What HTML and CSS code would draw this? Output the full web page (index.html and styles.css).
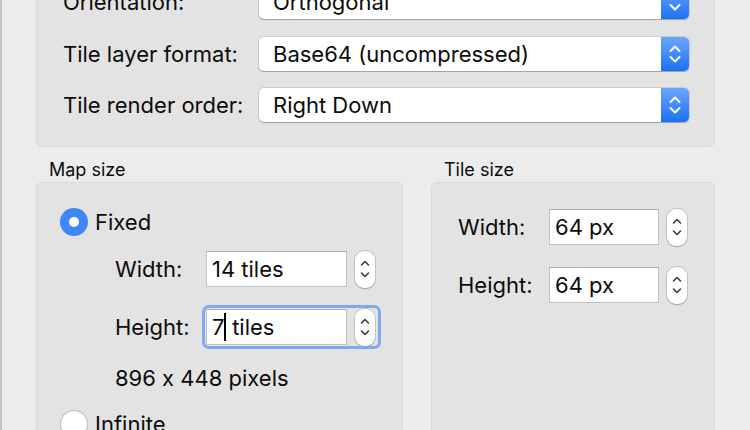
FILE: index.html
```html
<!DOCTYPE html>
<html>
<head>
<meta charset="utf-8">
<link rel="stylesheet" href="styles.css">
</head>
<body>
<div class="window">
  <section class="group top">
    <div class="form">
      <div class="row">
        <span class="label">Orientation:</span>
        <div class="combo"><span class="combo-text">Orthogonal</span><span class="combo-btn"><svg width="14" height="20" viewBox="0 0 14 20"><path d="M2.5 7 L7 2.5 L11.5 7 M2.5 13 L7 17.5 L11.5 13"/></svg></span></div>
      </div>
      <div class="row">
        <span class="label">Tile layer format:</span>
        <div class="combo"><span class="combo-text">Base64 (uncompressed)</span><span class="combo-btn"><svg width="14" height="20" viewBox="0 0 14 20"><path d="M2.5 7 L7 2.5 L11.5 7 M2.5 13 L7 17.5 L11.5 13"/></svg></span></div>
      </div>
      <div class="row">
        <span class="label">Tile render order:</span>
        <div class="combo"><span class="combo-text">Right Down</span><span class="combo-btn"><svg width="14" height="20" viewBox="0 0 14 20"><path d="M2.5 7 L7 2.5 L11.5 7 M2.5 13 L7 17.5 L11.5 13"/></svg></span></div>
      </div>
    </div>
  </section>

  <div class="columns">
    <div class="col col-map">
      <div class="group-title">Map size</div>
      <div class="group box map-box">
        <div class="radio-row">
          <span class="radio checked"></span><span class="radio-label">Fixed</span>
        </div>
        <div class="fields map-fields">
          <div class="field-row">
            <span class="flabel">Width:</span>
            <div class="spin">
              <div class="input"><span>14 tiles</span></div>
              <span class="stepper"><svg width="10" height="20" viewBox="0 0 10 20"><path d="M1.5 6 L5 2.5 L8.5 6 M1.5 14 L5 17.5 L8.5 14"/></svg></span>
            </div>
          </div>
          <div class="field-row">
            <span class="flabel">Height:</span>
            <div class="spin focused">
              <div class="input"><span>7</span><span class="caret"></span><span> tiles</span></div>
              <span class="stepper"><svg width="10" height="20" viewBox="0 0 10 20"><path d="M1.5 6 L5 2.5 L8.5 6 M1.5 14 L5 17.5 L8.5 14"/></svg></span>
            </div>
          </div>
          <div class="pixels">896 x 448 pixels</div>
        </div>
        <div class="radio-row">
          <span class="radio"></span><span class="radio-label">Infinite</span>
        </div>
      </div>
    </div>

    <div class="col col-tile">
      <div class="group-title">Tile size</div>
      <div class="group box tile-box">
        <div class="fields">
          <div class="field-row">
            <span class="flabel">Width:</span>
            <div class="spin">
              <div class="input small"><span>64 px</span></div>
              <span class="stepper"><svg width="10" height="20" viewBox="0 0 10 20"><path d="M1.5 6 L5 2.5 L8.5 6 M1.5 14 L5 17.5 L8.5 14"/></svg></span>
            </div>
          </div>
          <div class="field-row">
            <span class="flabel">Height:</span>
            <div class="spin">
              <div class="input small"><span>64 px</span></div>
              <span class="stepper"><svg width="10" height="20" viewBox="0 0 10 20"><path d="M1.5 6 L5 2.5 L8.5 6 M1.5 14 L5 17.5 L8.5 14"/></svg></span>
            </div>
          </div>
        </div>
      </div>
    </div>
  </div>
</div>
</body>
</html>
```

FILE: styles.css
```css
* { box-sizing: border-box; }
html, body { margin: 0; padding: 0; }
body {
  width: 750px;
  height: 430px;
  overflow: hidden;
  background: #ececec;
  font-family: Inter, "Noto Sans", sans-serif;
  font-feature-settings: "calt" 0;
  color: #0c0c0c;
}
.window {
  display: flow-root;
  height: 430px;
  overflow: hidden;
  border-left: 2px solid #c4c4c4;
  padding-left: 34px;
}
.group {
  background: #e3e3e3;
  border: 1px solid #dadada;
  border-radius: 6px;
}
.top {
  width: 679px;
  margin-top: -30px;
  padding: 14px 0 24px 26px;
}
.form {
  display: flex;
  flex-direction: column;
  gap: 17.6px;
}
.row {
  display: flex;
  align-items: center;
  height: 34px;
}
.label {
  width: 196px;
  font-size: 22px;
}
.combo {
  display: flex;
  width: 430px;
  height: 34px;
  border-radius: 5px;
  background: #fff;
  box-shadow: 0 0 0 1px rgba(0,0,0,0.10), 0 1px 1px rgba(0,0,0,0.22);
}
.combo-text {
  flex: 1;
  padding-left: 14px;
  font-size: 22px;
  line-height: 34px;
}
.combo-btn {
  width: 28px;
  border-radius: 0 5px 5px 0;
  background: linear-gradient(#6aa7fa, #1d70f5);
  display: flex;
  align-items: center;
  justify-content: center;
}
.combo-btn svg path {
  fill: none;
  stroke: #fff;
  stroke-width: 2;
  stroke-linecap: round;
  stroke-linejoin: round;
}
.columns {
  display: flex;
  gap: 28px;
  margin-top: 10px;
}
.col-map { width: 367px; }
.col-tile { width: 284px; }
.group-title {
  height: 25px;
  line-height: 25px;
  font-size: 18px;
  padding-left: 13px;
}
.box {
  height: 260px;
}
.map-box { padding: 25px 0 0 23px; }
.tile-box { padding: 25px 0 0 26px; }
.radio-row {
  display: flex;
  align-items: center;
  gap: 7px;
  height: 28px;
}
.radio {
  width: 28px;
  height: 28px;
  border-radius: 50%;
  background: #fff;
  box-shadow: inset 0 0 0 1px #b9b9b9, 0 1px 1px rgba(0,0,0,0.12);
  display: flex;
  align-items: center;
  justify-content: center;
}
.radio.checked {
  background: #3d88f6;
  box-shadow: none;
}
.radio.checked::after {
  content: "";
  width: 10px;
  height: 10px;
  border-radius: 50%;
  background: #fff;
}
.radio-label { font-size: 22px; }
.fields {
  display: flex;
  flex-direction: column;
  gap: 20px;
}
.map-fields {
  margin: 14px 0 20px 55px;
}
.field-row {
  display: flex;
  align-items: center;
  height: 38px;
}
.flabel {
  width: 91px;
  font-size: 22px;
}
.spin {
  display: flex;
  align-items: center;
  gap: 8px;
  height: 38px;
  border-radius: 4px;
}
.spin.focused {
  outline: 3px solid #7eaaec;
  outline-offset: 0;
  margin-left: -1px;
  padding-left: 1px;
  padding-right: 3px;
}
.input {
  width: 141px;
  height: 36px;
  background: #fff;
  border: 1px solid #c2c2c2;
  border-top-color: #aeaeae;
  padding-left: 5px;
  font-size: 22px;
  line-height: 34px;
  display: flex;
  align-items: center;
  white-space: pre;
}
.input.small { width: 110px; }
.caret {
  display: inline-block;
  width: 1.5px;
  height: 28px;
  background: #000;
}
.stepper {
  width: 20px;
  height: 37px;
  border-radius: 9px;
  background: #fff;
  box-shadow: 0 0 0 1px rgba(0,0,0,0.13), 0 1px 1px rgba(0,0,0,0.18);
  display: flex;
  align-items: center;
  justify-content: center;
}
.stepper svg path {
  fill: none;
  stroke: #3a3a3a;
  stroke-width: 1.6;
  stroke-linecap: round;
  stroke-linejoin: round;
}
.pixels {
  font-size: 22px;
  height: 24px;
  line-height: 24px;
}
```
